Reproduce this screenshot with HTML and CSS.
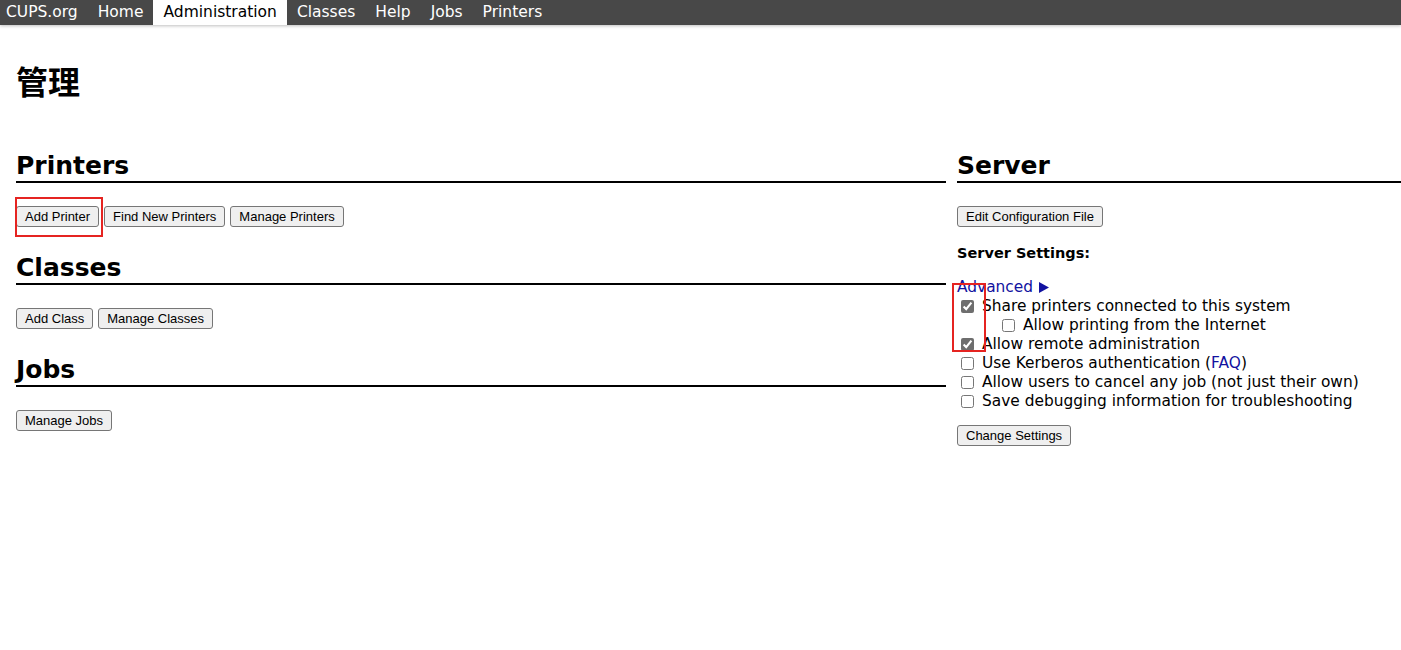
FILE: index.html
```html
<!DOCTYPE html>
<html lang="zh">
<head>
<meta charset="utf-8">
<title>管理 - CUPS</title>
<link rel="stylesheet" href="styles.css">
</head>
<body>
<nav class="topbar">
  <a class="nav-item brand" href="#">CUPS.org</a>
  <a class="nav-item" href="#">Home</a>
  <a class="nav-item active" href="#">Administration</a>
  <a class="nav-item" href="#">Classes</a>
  <a class="nav-item" href="#">Help</a>
  <a class="nav-item" href="#">Jobs</a>
  <a class="nav-item" href="#">Printers</a>
</nav>
<main class="page">
  <h1 class="title">管理</h1>
  <div class="columns">
    <div class="col-left">
      <h2 class="section-title">Printers</h2>
      <div class="btn-row">
        <span class="mark"><button class="btn" type="button">Add Printer</button></span>
        <button class="btn" type="button">Find New Printers</button>
        <button class="btn" type="button">Manage Printers</button>
      </div>
      <h2 class="section-title next">Classes</h2>
      <div class="btn-row">
        <button class="btn" type="button">Add Class</button>
        <button class="btn" type="button">Manage Classes</button>
      </div>
      <h2 class="section-title next">Jobs</h2>
      <div class="btn-row">
        <button class="btn" type="button">Manage Jobs</button>
      </div>
    </div>
    <div class="col-right">
      <h2 class="section-title">Server</h2>
      <div class="btn-row">
        <button class="btn" type="button">Edit Configuration File</button>
      </div>
      <h3 class="sub-title">Server Settings:</h3>
      <div class="settings">
        <div class="row"><a class="link" href="#">Advanced</a>&nbsp;<svg class="tri" width="10" height="11" viewBox="0 0 10 11"><polygon points="0,0 10,5.5 0,11" fill="#1212a0"/></svg></div>
        <label class="row"><input type="checkbox" checked>Share printers connected to this system</label>
        <label class="row indent"><input type="checkbox">Allow printing from the Internet</label>
        <label class="row"><input type="checkbox" checked>Allow remote administration</label>
        <label class="row"><input type="checkbox">Use Kerberos authentication (<a class="link" href="#">FAQ</a>)</label>
        <label class="row"><input type="checkbox">Allow users to cancel any job (not just their own)</label>
        <label class="row"><input type="checkbox">Save debugging information for troubleshooting</label>
        <div class="check-mark"></div>
      </div>
      <div class="btn-row submit">
        <button class="btn" type="button">Change Settings</button>
      </div>
    </div>
  </div>
</main>
</body>
</html>
```
FILE: styles.css
```css
* { box-sizing: border-box; }
html, body { background: #fff; }
body {
  margin: 0;
  font-family: "DejaVu Sans", Verdana, sans-serif;
  font-size: 15.4px;
  color: #000;
}
.topbar {
  display: flex;
  height: 25px;
  background: #484848;
  box-shadow: 0 1px 3px rgba(0, 0, 0, 0.25);
}
.nav-item {
  display: block;
  padding: 0 10px;
  line-height: 25px;
  font-size: 15.5px;
  color: #fff;
  text-decoration: none;
}
.nav-item.brand { padding-left: 6px; }
.nav-item.active { background: #fff; color: #000; }
.page { padding-left: 16px; }
.title {
  margin: 35px 0 51px;
  font-family: "Noto Sans CJK SC", sans-serif;
  font-weight: 700;
  font-size: 32px;
  line-height: 40px;
}
.columns {
  display: grid;
  grid-template-columns: 930px 1fr;
  column-gap: 11px;
}
.section-title {
  margin: 0 0 23px;
  font-size: 25px;
  line-height: 30px;
  font-weight: 700;
  border-bottom: 2px solid #000;
}
.section-title.next { margin-top: 26px; }
.btn-row { display: flex; gap: 5px; }
.btn {
  margin: 0;
  padding: 1px 8px;
  font-family: "Liberation Sans", Arial, sans-serif;
  font-size: 13px;
  line-height: 17px;
  color: #000;
  background: #efefef;
  border: 1px solid #767676;
  border-radius: 3px;
}
.mark { position: relative; display: inline-flex; }
.mark::after {
  content: "";
  position: absolute;
  left: -1px;
  right: -4px;
  top: -9px;
  bottom: -10px;
  border: 2px solid #e52421;
  pointer-events: none;
}
.sub-title {
  margin: 17px 0 15px;
  font-size: 14.5px;
  line-height: 19px;
  font-weight: 700;
}
.settings { position: relative; }
.row {
  display: flex;
  align-items: center;
  height: 19px;
  line-height: 19px;
  white-space: nowrap;
}
.row.indent { padding-left: 41px; }
.row input {
  margin: 0 8px 0 4px;
  width: 13px;
  height: 13px;
  accent-color: #6e6e6e;
}
.link { color: #1212a0; text-decoration: none; }
.tri { margin-left: 1px; }
.check-mark {
  position: absolute;
  left: -5px;
  top: 5px;
  width: 34px;
  height: 69px;
  border: 2px solid #e52421;
  pointer-events: none;
}
.btn-row.submit { margin-top: 14px; }
```
